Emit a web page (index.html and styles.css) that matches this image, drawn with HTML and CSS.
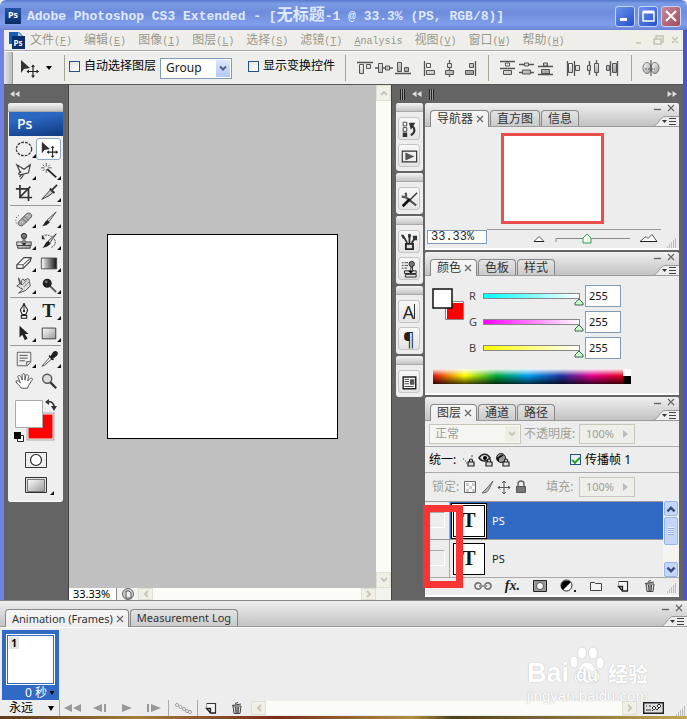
FILE: index.html
```html
<!DOCTYPE html>
<html lang="zh-CN">
<head>
<meta charset="utf-8">
<title>Adobe Photoshop CS3 Extended</title>
<link rel="stylesheet" href="styles.css">
</head>
<body>
<svg class="defs" aria-hidden="true">
  <defs>
    <linearGradient id="metal" x1="0" y1="0" x2="1" y2="1"><stop offset="0" stop-color="#fff"/><stop offset="1" stop-color="#999"/></linearGradient>
    <linearGradient id="fade"><stop offset="0" stop-color="#fff"/><stop offset="1" stop-color="#111"/></linearGradient>
  </defs>
  <symbol id="i-move" viewBox="0 0 20 20"><path d="M2 2v13l3-4 6-1z" fill="#333"/><path d="M14 8v11M8.500 13.500h11" stroke="#222" stroke-width="1.200"/><path d="M14 6.500l-2 2.500h4zM14 20l-2-2.500h4zM7.500 13.500l2.500-2v4zM20 13.500l-2.500-2v4z" fill="#222"/></symbol>
  <symbol id="i-chev" viewBox="0 0 10 10"><path d="M2 3l3 3 3-3" fill="none" stroke="currentColor" stroke-width="2"/></symbol>
  <symbol id="i-trash" viewBox="0 0 14 14"><path d="M3 5h8l-1 7.500H4z" fill="#ddd" stroke="#444"/><path d="M2 4.500l9-1.500M5 2.500l3-1M5.500 6l.5 6M7 6v6M8.500 6L8 12" fill="none" stroke="#444"/></symbol>
  <symbol id="i-new" viewBox="0 0 14 14"><path d="M2 2h10v10H2z" fill="#f4f4f4"/><path d="M2 2.500h9.500V12" fill="none" stroke="#333" stroke-width="1.200"/><path d="M12 12H6.500V7.500H2.500L6.500 12" fill="#ccc" stroke="#222" stroke-width="1.300"/><path d="M2.500 2v5" stroke="#999"/></symbol>
  <symbol id="i-min" viewBox="0 0 10 10"><path d="M2 6.500h7" stroke="#666" stroke-width="1.400"/></symbol>
  <symbol id="i-x" viewBox="0 0 10 10"><path d="M2 2l6 6M8 2L2 8" stroke="#666" stroke-width="1.200"/></symbol>
  <symbol id="i-menu" viewBox="0 0 26 10"><path d="M0 10C5 10 7 0 12 0h14v10z" fill="#eee"/><path d="M0 10C5 10 7 .5 12 .5h14" fill="none" stroke="#999"/><path d="M9 4h5l-2.500 3z" fill="#333"/><path d="M16 2.500h7M16 5.500h7M16 8.500h7" stroke="#444"/></symbol>
  <symbol id="i-lock" viewBox="0 0 8 9"><path d="M2.500 4V2.500a1.500 1.500 0 013 0V4M1 4h6v4H1z" fill="#ddd" stroke="#222" stroke-width="1.200"/></symbol>
  <symbol id="i-grip" viewBox="0 0 10 10"><path d="M8 1h1M6 3h1M8 3h1M4 5h1M6 5h1M8 5h1M2 7h1M4 7h1M6 7h1M8 7h1M0 9h1M2 9h1M4 9h1M6 9h1M8 9h1" stroke="#888"/></symbol>
</svg>

<main class="app">
  <header class="titlebar">
    <span class="logo">Ps</span>
    <h1>Adobe Photoshop CS3 Extended - [<span>无标题</span>-1 @ 33.3% (PS, RGB/8)]</h1>
    <button class="win" aria-label="最小化"><svg viewBox="0 0 18 18"><path d="M4 12.500h7" stroke="#fff" stroke-width="3"/></svg></button>
    <button class="win" aria-label="最大化"><svg viewBox="0 0 18 18"><path d="M4 5h11v9H4z" fill="none" stroke="#fff" stroke-width="1.500"/><path d="M4 5h11" stroke="#fff" stroke-width="3"/></svg></button>
    <button class="win close" aria-label="关闭"><svg viewBox="0 0 18 18"><path d="M4 4l10 10M14 4L4 14" stroke="#fff" stroke-width="2"/></svg></button>
  </header>

  <div class="frame">
    <nav class="menubar">
      <svg class="docicon" viewBox="0 0 17 17"><path d="M1 0h10l4 4v8H1z" fill="#1460b8"/><path d="M10 0v5h5" fill="#a8cdf0"/><path d="M4 4h13v13H4z" fill="#0b2f6b"/><text x="5.500" y="14" fill="#fff" font-size="8" font-weight="bold">Ps</text></svg>
      <a href="#">文件<i>(<u>F</u>)</i></a><a href="#">编辑<i>(<u>E</u>)</i></a><a href="#">图像<i>(<u>I</u>)</i></a><a href="#">图层<i>(<u>L</u>)</i></a><a href="#">选择<i>(<u>S</u>)</i></a><a href="#">滤镜<i>(<u>T</u>)</i></a><a href="#"><i><u>A</u>nalysis</i></a><a href="#">视图<i>(<u>V</u>)</i></a><a href="#">窗口<i>(<u>W</u>)</i></a><a href="#">帮助<i>(<u>H</u>)</i></a>
      <svg class="mdi" viewBox="0 0 52 14"><rect width="52" height="14" fill="#f1f0e6"/><path d="M5 10h5M23 6h7v5h-7zM25 6V3h7v6h-2M41 4l6 6M47 4l-6 6" fill="none" stroke="#c2c2b4" stroke-width="1.500"/></svg>
    </nav>

    <div class="options">
      <span class="gripper"></span>
      <svg class="opt-tool" viewBox="0 0 20 20"><use href="#i-move"/></svg>
      <svg class="tri" viewBox="0 0 6 4"><path d="M0 0h6L3 4z"/></svg>
      <span class="div"></span>
      <label class="check"><input type="checkbox">自动选择图层</label>
      <span class="combo group-combo"><select aria-label="自动选择"><option>Group</option></select><svg viewBox="0 0 10 10"><use href="#i-chev"/></svg></span>
      <label class="check second"><input type="checkbox">显示变换控件</label>
      <div class="aligns">
        <span class="div"></span>
        <svg viewBox="0 0 56 18"><g fill="url(#metal)" stroke="#555"><path d="M3.500 5.500h4v9h-4zM10.500 5.500h4v4h-4zM22.500 4.500h4v9h-4zM29.500 7h4v4h-4zM41.500 3.500h4v9h-4zM48.500 8.500h4v4h-4z"/><path d="M1 3.500h16M19 9h3M27 9h2M34 9h3M39 14.500h16" stroke-width="1.300"/></g></svg>
        <svg viewBox="0 0 56 18"><g fill="url(#metal)" stroke="#555"><path d="M4.500 4.500h4v4h-4zM4.500 11.500h8v4h-8zM25.500 4.500h4v4h-4zM23.500 11.500h8v4h-8zM47.500 4.500h4v4h-4zM43.500 11.500h8v4h-8z"/><path d="M2.500 2v15M27.500 1v3M27.500 9v2M27.500 16v2M53.500 2v15" stroke-width="1.300"/></g></svg>
        <span class="div"></span>
        <svg viewBox="0 0 56 18"><g fill="url(#metal)" stroke="#555"><path d="M6.500 4h4v3h-4zM4.500 11.500h8v4h-8zM25.500 4h4v3h-4zM23.500 11h8v4h-8zM44.500 4h4v3h-4zM42.500 10.500h8v4h-8z"/><path d="M1 2.500h15M1 9.500h15M20 5.500h5M30 5.500h5M20 13.500h3M32 13.500h3M39 7.500h15M39 15.500h15" stroke-width="1.300"/></g></svg>
        <svg viewBox="0 0 56 18"><g fill="url(#metal)" stroke="#555"><path d="M3.500 4.500h4v9h-4zM10.500 6.500h4v5h-4zM22.500 6.500h3v5h-3zM29.500 4.500h4v9h-4zM41.500 6.500h3v5h-3zM47.500 4.500h4v9h-4z"/><path d="M2.500 2v15M9.500 2v15M24.500 2v4M24.500 12v4M31.500 1v3M31.500 14v3M45.500 2v15M52.500 2v15" stroke-width="1.300"/></g></svg>
        <span class="div"></span>
        <svg class="auto" viewBox="0 0 18 18"><g fill="url(#metal)" stroke="#777"><ellipse cx="5" cy="9" rx="4" ry="5.500"/><ellipse cx="13" cy="9" rx="4" ry="5.500"/></g><path d="M9 1v16" stroke="#444"/><path d="M3 10h10" stroke="#666" stroke-dasharray="2 1"/></svg>
      </div>
    </div>

    <section class="workspace">
      <aside class="toolbox">
        <div class="dockbar"><svg class="dbl" viewBox="0 0 10 6"><path d="M4.500 0v6L0 3zM9.500 0v6L5 3z" fill="#ddd"/></svg></div>
        <div class="palette">
          <div class="grab"></div>
          <div class="banner">Ps</div>
          <div class="tools">
            <button class="more" aria-label="椭圆选框"><svg viewBox="0 0 20 20"><ellipse cx="10" cy="10" rx="8.500" ry="7.500" fill="none" stroke="#333" stroke-width="1.400" stroke-dasharray="3 1.300"/></svg></button>
            <button class="on" aria-label="移动"><svg viewBox="0 0 20 20"><use href="#i-move"/></svg></button>
            <button class="more" aria-label="套索"><svg viewBox="0 0 20 20"><path d="M6 12L2 3l8 5 7-5-2 9-8 2-2 3m2-6c-4 1-4 4 0 3s1 3-1 5" fill="none" stroke="#444" stroke-width="1.300"/></svg></button>
            <button class="more" aria-label="魔棒"><svg viewBox="0 0 20 20"><path d="M7 1v4M7 8v4M1 6.500h4M9 6.500h4M3 3l2 2M11 3L9 5M3 10l2-2" stroke="#555"/><path d="M8 8l10 9" stroke="#222" stroke-width="2"/></svg></button>
            <button aria-label="裁剪"><svg viewBox="0 0 20 20"><path d="M1 5.500h14V19M5.500 1v14H19M5 15L17 3" fill="none" stroke="#333" stroke-width="1.900"/></svg></button>
            <button class="more" aria-label="切片"><svg viewBox="0 0 20 20"><path d="M2 17L12 6l3 3-5 4z" fill="url(#metal)" stroke="#333"/><path d="M12 8l7-7M11 5l5 5" stroke="#333" stroke-width="2"/></svg></button>
          </div>
          <hr>
          <div class="tools">
            <button class="more" aria-label="修复画笔"><svg viewBox="0 0 20 20"><path d="M4 6C0 8 0 14 3 17" fill="none" stroke="#333" stroke-dasharray="1 2"/><path d="M4 13l9-9c3-2 7 1 5 4l-9 9c-3 2-7-1-5-4z" fill="#aaa" stroke="#555"/><path d="M8 9l5 5M10 7l5 5" stroke="#666"/><path d="M6 13h1M8 14h1M13 6h1M15 7h1M11 10h1" stroke="#eee"/></svg></button>
            <button class="more" aria-label="画笔"><svg viewBox="0 0 20 20"><path d="M18 2L8 11l2 2z" fill="#ddd" stroke="#444"/><path d="M8 11l3 3-4 3-5 1c2-1 3-5 6-7z" fill="#222"/></svg></button>
            <button class="more" aria-label="仿制图章"><svg viewBox="0 0 20 20"><circle cx="10" cy="4.500" r="3" fill="#777" stroke="#333"/><path d="M9 7h2v4h7v4H2v-4h7zM3 15v3h14v-3" fill="url(#metal)" stroke="#333"/><path d="M7 12h6l-3 3z" fill="#222"/></svg></button>
            <button class="more" aria-label="历史画笔"><svg viewBox="0 0 20 20"><path d="M18 2L9 10l2 2z" fill="#ddd" stroke="#333"/><path d="M9 10l3 3-4 3-6 2c3-1 3-6 7-8z" fill="#222"/><path d="M3 5c5-4 8 0 10 0M16 8c3 5-1 9-4 9" fill="none" stroke="#333" stroke-dasharray="2 1"/><path d="M2 3v5h4z" fill="#333"/></svg></button>
            <button class="more" aria-label="橡皮擦"><svg viewBox="0 0 20 20"><path d="M2 12l8-8h8l-1 4-8 8H2z" fill="#fff" stroke="#444" stroke-width="1.300"/><path d="M2 12h7l9-8M9 12v4" fill="none" stroke="#555" stroke-width="1.200"/></svg></button>
            <button class="more" aria-label="渐变"><svg viewBox="0 0 20 20"><path d="M1.500 4.500h17v12h-17z" fill="url(#fade)" stroke="#444"/></svg></button>
            <button class="more" aria-label="涂抹"><svg viewBox="0 0 20 20"><path d="M4 2l3 8V5c1-2 3-2 3 0l4-2c2 0 2 2 2 3l1 5-5 5-8 3c3-3 5-4 4-5-3 0-4-3-6-3l3-2z" fill="#ddd" stroke="#444"/><path d="M8 10l5-5M10 12l5-5" stroke="#666"/></svg></button>
            <button class="more" aria-label="减淡"><svg viewBox="0 0 20 20"><path d="M11 11l7 7" stroke="#555" stroke-width="2"/><circle cx="8" cy="8" r="5" fill="#222"/><circle cx="7" cy="6.500" r="1.500" fill="#777"/></svg></button>
          </div>
          <hr>
          <div class="tools">
            <button class="more" aria-label="钢笔"><svg viewBox="0 0 20 20"><path d="M10 1c0 4-4 6-4 8l2 5h4l2-5c0-2-4-4-4-8zM7 15h6v3H7z" fill="#eee" stroke="#222" stroke-width="1.200"/><path d="M10 2v7" stroke="#222"/><circle cx="10" cy="10" r="1.200"/></svg></button>
            <button class="more glyph" aria-label="文字">T</button>
            <button class="more" aria-label="路径选择"><svg viewBox="0 0 20 20"><path d="M5 2v13l3-3 3 6 3-2-3-5h4z" fill="#222"/></svg></button>
            <button class="more" aria-label="矩形"><svg viewBox="0 0 20 20"><path d="M2.500 4.500h15v12h-15z" fill="url(#metal)" stroke="#333"/></svg></button>
          </div>
          <hr>
          <div class="tools">
            <button class="more" aria-label="注释"><svg viewBox="0 0 20 20"><path d="M2.500 2.500h15v11l-4 4h-11z" fill="#eee" stroke="#555"/><path d="M5 6h9M5 9h9M5 12h6M13 17v-4h4" fill="none" stroke="#444"/></svg></button>
            <button class="more" aria-label="吸管"><svg viewBox="0 0 20 20"><path d="M3 17l8-9 2 2-8 7-3 1z" fill="#fff" stroke="#444"/><path d="M10 6l5 5M12 8l3-5c2-3 6 0 3 3l-5 4z" fill="#222" stroke="#222" stroke-width="1.500"/></svg></button>
            <button aria-label="抓手"><svg viewBox="0 0 20 20"><path d="M7 18c-1-3-6-5-6-8 2-1 4 1 5 2L3 5c1-2 3-1 4 1l1 3V3c1-2 3-1 3 0v6l1-5c1-2 3-1 3 1l-1 5 3-3c2-1 3 1 2 2l-4 6-1 3z" fill="#fff" stroke="#555" stroke-width="1.100"/></svg></button>
            <button aria-label="缩放"><svg viewBox="0 0 20 20"><path d="M11 11l7 7" stroke="#333" stroke-width="2.500"/><circle cx="8" cy="7.500" r="5" fill="#ddd" stroke="#555" stroke-width="1.500"/></svg></button>
          </div>
          <svg class="swatches" viewBox="0 0 55 52"><path d="M20 22h25v25H20z" fill="red" stroke="#aaa" stroke-width="3"/><path d="M20 22h25v25H20z" fill="red" stroke="#eee"/><path d="M7.500 8.500h27v27h-27z" fill="#fff" stroke="#aaa"/><path d="M40 10c4-1 6 2 6 5" fill="none" stroke="#333" stroke-width="1.600"/><path d="M37 10l4-3v6zM43 14h6l-3 5z" fill="#333"/><path d="M9.500 43.500h6v6h-6z" fill="#fff" stroke="#222"/><path d="M6 40h7v7H6z"/></svg>
          <div class="modes">
            <button aria-label="快速蒙版"><svg viewBox="0 0 22 16"><path d="M.5.500h21v15H.5z" fill="#eee" stroke="#333"/><circle cx="11" cy="8" r="5.500" fill="#fff" stroke="#222" stroke-width="1.200"/></svg></button>
            <button class="more" aria-label="屏幕模式"><svg viewBox="0 0 22 16"><path d="M.5.500h21v15H.5z" fill="#ddd" stroke="#333"/><path d="M2.500 2.500h17v12h-17z" fill="url(#metal)" stroke="#777"/></svg></button>
          </div>
        </div>
      </aside>

      <div class="document">
        <div class="stage"><div class="canvas"></div></div>
        <div class="vscroll"><button aria-label="上"><svg class="flip" viewBox="0 0 10 10"><use href="#i-chev"/></svg></button><button aria-label="下"><svg viewBox="0 0 10 10"><use href="#i-chev"/></svg></button></div>
        <div class="status"><span class="zoomtext">33.33%</span><button class="info" aria-label="文档信息"><svg viewBox="0 0 14 12"><circle cx="7" cy="6" r="5.500" fill="#ccc" stroke="#666"/><path d="M5 3h3l2 2v5H5z" fill="#eee" stroke="#555"/></svg></button><div class="hscroll"><button aria-label="左"><svg class="left" viewBox="0 0 10 10"><use href="#i-chev"/></svg></button><button aria-label="右"><svg class="right" viewBox="0 0 10 10"><use href="#i-chev"/></svg></button></div></div>
      </div>

      <aside class="docks">
        <div class="dockbar"><span class="bars"></span><svg class="dbl" viewBox="0 0 10 6"><path d="M4.500 0v6L0 3zM9.500 0v6L5 3z" fill="#ddd"/></svg><span class="bars"></span><svg class="dbl end" viewBox="0 0 10 6"><path d="M.5 0v6L5 3zM5.500 0v6L10 3z" fill="#ddd"/></svg></div>
        <div class="dockcols">
          <div class="icondock">
            <div class="igroup"><div class="grab"></div>
              <button aria-label="历史记录"><svg viewBox="0 0 20 20"><path d="M3.500 2.500h4v4h-4zM3.500 8.500h4v4h-4z" fill="#fff" stroke="#333"/><path d="M3 14h5v5H3z" fill="#333"/><path d="M12 17c5-3 5-7 2-10" fill="none" stroke="#333" stroke-width="2.500"/><path d="M10 3h7l-5 8z" fill="#333"/></svg></button>
              <button aria-label="动作"><svg viewBox="0 0 20 20"><path d="M2.500 4.500h16v12h-16z" fill="#eee" stroke="#333" stroke-width="1.300"/><path d="M6 6v9l10-4.500z" fill="#555"/></svg></button></div>
            <div class="igroup"><div class="grab"></div>
              <button aria-label="工具预设"><svg viewBox="0 0 20 20"><path d="M2 7c4 2 6 0 4-4M5 7l13 10" fill="none" stroke="#555" stroke-width="2.500"/><path d="M19 3l-8 8" stroke="#333" stroke-width="1.500"/><path d="M11 10l-8 8" stroke="#111" stroke-width="3"/></svg></button></div>
            <div class="igroup"><div class="grab"></div>
              <button aria-label="画笔"><svg viewBox="0 0 20 20"><path d="M6.500 12h8v6h-8z" fill="#ddd" stroke="#222" stroke-width="2"/><path d="M8 11L4 4M10.500 11V3M13 11l4-6" stroke="#333" stroke-width="2"/><path d="M1 2h3l2 5-3-1zM9 1h3v4H9zM14 3h5v5h-4z" fill="#333"/></svg></button>
              <button aria-label="仿制源"><svg viewBox="0 0 20 20"><path d="M2 3h2M2 6h2M2 9h2M5 3h4M5 6h4M5 9h3" stroke="#333"/><circle cx="13" cy="4.500" r="3" fill="#777" stroke="#222"/><path d="M12 8h2v4h4v3H5v-3h7zM6 16h12v3H6z" fill="#ddd" stroke="#222"/><path d="M9 12h6l-3 3z"/></svg></button></div>
            <div class="igroup"><div class="grab"></div>
              <button class="chartype" aria-label="字符">A<span class="caret"></span></button>
              <button class="chartype" aria-label="段落">¶</button></div>
            <div class="igroup"><div class="grab"></div>
              <button aria-label="图层复合"><svg viewBox="0 0 20 20"><path d="M3.500 4.500h14v13h-14z" fill="#fff" stroke="#222" stroke-width="1.600"/><path d="M5 7h5M5 9.500h5M5 12h5M5 15h10" stroke="#333"/><path d="M11 7h5v6h-5z" fill="#555"/></svg></button></div>
          </div>

          <div class="panels">
            <section class="panel nav">
              <header class="tabs"><button class="tab active">导航器<svg viewBox="0 0 10 10"><use href="#i-x"/></svg></button><button class="tab">直方图</button><button class="tab">信息</button><div class="ctl"><span><svg viewBox="0 0 10 10"><use href="#i-min"/></svg><svg viewBox="0 0 10 10"><use href="#i-x"/></svg></span><svg class="pm" viewBox="0 0 26 10"><use href="#i-menu"/></svg></div></header>
              <div class="preview"><div></div></div>
              <footer class="navfoot"><input type="text" aria-label="缩放比例" value="33.33%"><svg class="navslide" viewBox="0 0 180 19"><path d="M0 .5h174" stroke="#999"/><path d="M47 12.500l5-5 5 5z" fill="#fff" stroke="#555"/><path d="M47 12.500h10" stroke="#222"/><path d="M69 13v-3.500h74" fill="none" stroke="#888"/><path d="M96 14V9l4-4 4 4v5z" fill="#efe" stroke="#3a9a50"/><path d="M153 12.500l6-5 2 2 4-4 5 7" fill="#fff" stroke="#555"/><path d="M153 12.500h17" stroke="#222"/></svg><svg class="grip" viewBox="0 0 10 10"><use href="#i-grip"/></svg></footer>
            </section>

            <section class="panel color">
              <header class="tabs"><button class="tab active">颜色<svg viewBox="0 0 10 10"><use href="#i-x"/></svg></button><button class="tab">色板</button><button class="tab">样式</button><div class="ctl"><span><svg viewBox="0 0 10 10"><use href="#i-min"/></svg><svg viewBox="0 0 10 10"><use href="#i-x"/></svg></span><svg class="pm" viewBox="0 0 26 10"><use href="#i-menu"/></svg></div></header>
              <div class="mixer">
                <svg class="duo" viewBox="0 0 34 34"><path d="M13.500 13.500h18v18h-18z" fill="#fff" stroke="#888"/><path d="M15 15h16v16H15z" fill="red"/><path d="M1 1h19v19H1z" fill="#fff" stroke="#111" stroke-width="1.500"/></svg>
                <div class="channels">
                  <label><span>R</span><b class="bar cyan"><svg viewBox="0 0 10 8"><path d="M1 7V5l4-4 4 4v2z" fill="#cfc" stroke="#365"/></svg></b><input type="text" value="255"></label>
                  <label><span>G</span><b class="bar magenta"><svg viewBox="0 0 10 8"><path d="M1 7V5l4-4 4 4v2z" fill="#cfc" stroke="#365"/></svg></b><input type="text" value="255"></label>
                  <label><span>B</span><b class="bar yellow"><svg viewBox="0 0 10 8"><path d="M1 7V5l4-4 4 4v2z" fill="#cfc" stroke="#365"/></svg></b><input type="text" value="255"></label>
                </div>
              </div>
              <div class="ramp"><i></i><b></b></div>
            </section>

            <section class="panel layers">
              <header class="tabs"><button class="tab active">图层<svg viewBox="0 0 10 10"><use href="#i-x"/></svg></button><button class="tab">通道</button><button class="tab">路径</button><div class="ctl"><span><svg viewBox="0 0 10 10"><use href="#i-min"/></svg><svg viewBox="0 0 10 10"><use href="#i-x"/></svg></span><svg class="pm" viewBox="0 0 26 10"><use href="#i-menu"/></svg></div></header>
              <div class="lrow dim"><span class="combo blend"><select aria-label="混合模式" disabled><option>正常</option></select><svg viewBox="0 0 10 10"><use href="#i-chev"/></svg></span><span>不透明度:</span><button class="pct" disabled>100%<svg viewBox="0 0 5 8"><path d="M0 0v8l5-4z" fill="#bbb"/></svg></button></div>
              <div class="lrow unify"><span>统一:</span>
                <svg viewBox="0 0 50 16"><path d="M2 7h1M4 9h1M5 11h1M7 10h1M8 8h1M10 4h2" stroke="#444"/><path d="M18 6c3-5 8-5 11 0-3 4-8 4-11 0z" fill="#ddd" stroke="#222" stroke-width="1.500"/><circle cx="24" cy="6" r="2"/><circle cx="40" cy="6" r="4.500" fill="#999" stroke="#222"/><path d="M37 9V6l5-3" fill="none" stroke="#111" stroke-width="2"/><use href="#i-lock" x="6" y="6" width="8" height="9"/><use href="#i-lock" x="24" y="6" width="8" height="9"/><use href="#i-lock" x="41" y="6" width="8" height="9"/></svg>
                <label class="check prop"><input type="checkbox" checked>传播帧 1</label></div>
              <div class="lrow dim locks"><span>锁定:</span>
                <svg viewBox="0 0 66 16"><path d="M2.500 2.500h11v11h-11z" fill="#fff" stroke="#666"/><path d="M4 4h3v3H4zM10 4h3v3h-3zM7 7h3v3H7zM4 10h3v3H4zM10 10h3v3h-3z" fill="#ccc"/><path d="M31 2l-6 7-5 5c5 0 6-2 7-4z" fill="#bbb" stroke="#666"/><path d="M42 3v11M36 8.500h12M40 4l2-2 2 2M40 13l2 2 2-2M38 7l-2 1.500 2 2M46 7l2 1.500-2 2" fill="none" stroke="#555"/><path d="M56 8V5c0-4 6-4 6 0v3" fill="none" stroke="#666" stroke-width="1.500"/><path d="M54.500 7.500h9v6h-9z" fill="#777" stroke="#555"/></svg>
                <span class="fill">填充:</span><button class="pct" disabled>100%<svg viewBox="0 0 5 8"><path d="M0 0v8l5-4z" fill="#bbb"/></svg></button></div>
              <div class="list">
                <ul>
                  <li class="sel"><span class="eye"><i></i></span><span class="thumb">T</span><span class="name">PS</span></li>
                  <li><span class="eye"><i></i></span><span class="thumb">T</span><span class="name">PS</span></li>
                </ul>
                <div class="xpscroll"><button aria-label="上"><svg class="flip" viewBox="0 0 10 10"><use href="#i-chev"/></svg></button><span></span><button class="down" aria-label="下"><svg viewBox="0 0 10 10"><use href="#i-chev"/></svg></button></div>
                <div class="marker"></div>
              </div>
              <footer class="lfoot">
                <button aria-label="链接"><svg viewBox="0 0 18 14"><path d="M1 7c0-4 6-4 6-1M7 8c0 3-6 3-6-1M11 6c0-3 6-3 6 1s-6 4-6 1M5 7h8" fill="none" stroke="#777" stroke-width="1.600"/></svg></button>
                <button class="fx" aria-label="图层样式">fx.</button>
                <button aria-label="蒙版"><svg viewBox="0 0 14 14"><path d="M.5 1.500h13v11H.5z" fill="#999" stroke="#222"/><circle cx="7" cy="7" r="3.500" fill="#fff" stroke="#555"/></svg></button>
                <button aria-label="调整图层"><svg class="wide" viewBox="0 0 16 14"><circle cx="6.500" cy="6.500" r="5.500" fill="#fff" stroke="#222"/><path d="M11 3L3 11C-2 6 3-1 11 3z"/><path d="M14 12h2" stroke="#222" stroke-width="2"/></svg></button>
                <button aria-label="组"><svg viewBox="0 0 14 14"><path d="M1.500 11.500v-8h4l1 1h6v7z" fill="#f4f4f4" stroke="#444"/></svg></button>
                <button aria-label="新建"><svg viewBox="0 0 14 14"><use href="#i-new"/></svg></button>
                <button aria-label="删除"><svg viewBox="0 0 14 14"><use href="#i-trash"/></svg></button>
                <svg class="grip" viewBox="0 0 10 10"><use href="#i-grip"/></svg>
              </footer>
            </section>
          </div>
        </div>
      </aside>
    </section>
  </div>

  <section class="anim">
    <header class="tabs"><button class="tab active">Animation (Frames)<svg viewBox="0 0 10 10"><use href="#i-x"/></svg></button><button class="tab">Measurement Log</button><div class="ctl"><span><svg viewBox="0 0 10 10"><use href="#i-min"/></svg><svg viewBox="0 0 10 10"><use href="#i-x"/></svg></span><svg class="pm" viewBox="0 0 26 10"><use href="#i-menu"/></svg></div></header>
    <div class="frames"><div class="cell"><div class="shot"><b>1</b></div><div class="delay">0 秒<svg class="tri" viewBox="0 0 6 5"><path d="M0 0h6L3 5z"/></svg></div></div></div>
    <footer class="playbar">
      <button class="loop">永远<svg class="tri" viewBox="0 0 6 5"><path d="M0 0h6L3 5z"/></svg></button>
      <div class="play">
        <button aria-label="第一帧"><svg viewBox="0 0 18 10"><path d="M8 1v8L0 5zM17 1v8L9 5z"/></svg></button>
        <button aria-label="上一帧"><svg viewBox="0 0 18 10"><path d="M11 1v8L2 5zM13 1h2v8h-2z"/></svg></button>
        <button aria-label="播放"><svg viewBox="0 0 18 10"><path d="M4 1v8l10-4z"/></svg></button>
        <button aria-label="下一帧"><svg viewBox="0 0 18 10"><path d="M2 1h2v8H2zM6 1v8l10-4z"/></svg></button>
      </div>
      <button class="tween" aria-label="过渡"><svg viewBox="0 0 18 12"><g fill="#fff" stroke="#999"><circle cx="3" cy="3" r="1.500"/><circle cx="6.500" cy="5" r="1.500"/><circle cx="10" cy="7" r="1.500"/><circle cx="13" cy="9" r="1.500"/><circle cx="16" cy="10" r="1.500"/></g></svg></button>
      <div class="ops"><button aria-label="复制帧"><svg viewBox="0 0 14 14"><use href="#i-new"/></svg></button><button aria-label="删除帧"><svg viewBox="0 0 14 14"><use href="#i-trash"/></svg></button></div>
      <div class="hscroll"><button aria-label="左"><svg class="left" viewBox="0 0 10 10"><use href="#i-chev"/></svg></button><button aria-label="右"><svg class="right" viewBox="0 0 10 10"><use href="#i-chev"/></svg></button></div>
      <button class="timeline" aria-label="时间轴"><svg viewBox="0 0 21 12"><path d="M.7.700h19.600v10.600H.7z" fill="#ddd" stroke="#222" stroke-width="1.400"/><path d="M3 4h1M3 8h5M6 4h2M9 9l3-3 2 2 4-4" fill="none" stroke="#333"/><path d="M11 4l2 2-2 2-2-2zM16 2l2 2-2 2-2-2z" fill="#fff" stroke="#222"/></svg></button>
      <svg class="grip" viewBox="0 0 10 10"><use href="#i-grip"/></svg>
    </footer>
    <div class="watermark">
      <div class="brand"><span>Bai</span><span class="paw"><svg viewBox="0 0 36 38"><g fill="#fff" stroke="#ddd"><ellipse cx="5" cy="16" rx="4" ry="6"/><ellipse cx="13" cy="7" rx="4.500" ry="6"/><ellipse cx="24" cy="7" rx="4.500" ry="6"/><ellipse cx="31" cy="17" rx="4" ry="6"/><path d="M18 16c6 0 7 6 11 10 4 5 1 11-5 11H11c-6 0-8-6-4-11 4-4 5-10 11-10z"/></g></svg><em>du</em></span><span class="cn">经验</span></div>
      <div class="site">jingyan.baidu.com</div>
    </div>
  </section>
  <div class="desktop"></div>
</main>
</body>
</html>
```
FILE: styles.css
```css
* { box-sizing: border-box; }
body {
  margin: 0;
  font: 11px/16px "Noto Sans", "Noto Sans CJK SC", sans-serif;
  color: #222;
  background: #ececec;
}
button, select, input { font: inherit; color: inherit; margin: 0; padding: 0; }
button { background: none; border: 0; display: flex; align-items: center; justify-content: center; }
svg { display: block; flex: none; }
.defs { position: absolute; width: 0; height: 0; }
.app { min-height: 100vh; display: flex; flex-direction: column; }

/* window title */
.titlebar {
  height: 30px;
  display: flex;
  align-items: center;
  gap: 3px;
  padding: 2px 6px 0 5px;
  border-radius: 6px 6px 0 0;
  background: linear-gradient(#5878cc, #7a9ce6 12%, #6f8cdc 40%, #7f9eea 80%, #6a84d4);
}
.logo {
  width: 16px; height: 16px;
  background: linear-gradient(#2456a4, #0b2c66);
  color: #fff;
  font-size: 9px;
  font-weight: bold;
  text-align: center;
  line-height: 14px;
}
h1 {
  flex: 1;
  margin: 0;
  padding-left: 3px;
  font: bold 13px/20px "Liberation Mono", "Noto Sans CJK SC", monospace;
  color: #dfe9ff;
  white-space: nowrap;
}
h1 span { font-size: 16px; }
.win {
  width: 20px; height: 21px;
  border: 1px solid #c5d5fa;
  border-radius: 3px;
  background: linear-gradient(135deg, #6d92f0, #2450c8);
}
.win svg { width: 18px; height: 18px; }
.win.close { background: linear-gradient(135deg, #c88898, #a04c60); }

.frame {
  flex: 1;
  display: flex;
  flex-direction: column;
  border-left: 4px solid #7080e4;
  border-right: 4px solid #4a56c8;
}

/* menu */
.menubar {
  height: 21px;
  display: flex;
  align-items: center;
  gap: 12px;
  padding: 0 0 0 4px;
  background: #efeeea;
  border-bottom: 1px solid #a8a8a8;
}
.docicon { width: 17px; height: 17px; margin-right: -7px; }
.menubar a { color: #99998c; text-decoration: none; font-size: 12px; white-space: nowrap; }
.menubar i { font: 10px "Liberation Mono", monospace; }
.mdi { width: 52px; height: 14px; margin-left: auto; }

/* tool options */
.options {
  height: 33px;
  display: flex;
  align-items: center;
  background: #eeeeec;
  border-top: 1px solid #fff;
}
.gripper { width: 9px; height: 100%; background: linear-gradient(90deg, #e4e4e4, #bbb); border-right: 1px solid #999; margin-right: 6px; }
.opt-tool { width: 20px; height: 20px; }
.tri { width: 6px; height: 4px; }
.options > .tri { margin: 0 12px 0 7px; }
.div { width: 1px; height: 26px; background: #a5a596; }
.check { display: flex; align-items: center; gap: 4px; font-size: 12px; color: #000; white-space: nowrap; }
.options .check { margin: 0 0 4px 4px; }
.options .check.second { margin: 0 10px 4px 16px; }
input[type="checkbox"] {
  appearance: none;
  width: 11px; height: 11px;
  border: 1px solid #24538a;
  background: linear-gradient(135deg, #e4e4e0, #fff);
}
input[type="checkbox"]:checked::after {
  content: "";
  display: block;
  width: 6px; height: 3px;
  margin: 2px 1px;
  border: solid #21a121;
  border-width: 0 0 2px 2px;
  transform: rotate(-45deg);
}
.combo { position: relative; display: block; }
.combo select {
  appearance: none;
  width: 100%; height: 100%;
  padding-left: 5px;
  border: 1px solid #7f9db9;
  border-radius: 0;
  background: #fff;
  opacity: 1;
}
.combo svg {
  position: absolute;
  right: 2px; top: 2px;
  width: 14px; height: calc(100% - 4px);
  padding: 2px;
  background: linear-gradient(#dce6fd, #b4c8f6);
  color: #4d6185;
  pointer-events: none;
}
.group-combo { width: 72px; height: 21px; margin-left: 4px; font-size: 12px; }
.aligns { display: flex; align-items: center; gap: 10px; }
.aligns svg { width: 56px; height: 18px; }
.aligns .auto { width: 18px; }

/* workspace */
.workspace { flex: 1; display: flex; background: #646464; border-top: 1px solid #555; }
.dockbar { height: 18px; display: flex; align-items: center; }
.dbl { width: 10px; height: 6px; }
.grab { height: 9px; background: linear-gradient(#f4f4f4, #c4c4c4); border-bottom: 1px solid #aaa; }

.toolbox { width: 65px; padding: 0 5px 0 4px; border-right: 1px solid #444; }
.toolbox .dockbar { padding-left: 2px; }
.palette { background: #efefef; border-radius: 3px; overflow: hidden; border-bottom: 1px solid #fff; }
.banner {
  height: 24px;
  margin: 0 0 2px 1px;
  padding-left: 8px;
  background: linear-gradient(170deg, #2b68c2 30%, #123f87 90%);
  color: #fff;
  font: 600 14px/24px "Open Sans", sans-serif;
}
.tools { display: grid; grid-template-columns: 25px 25px; padding-left: 3px; }
.tools button { position: relative; height: 22px; width: 25px; }
.tools svg { width: 18px; height: 18px; }
.tools .on { background: #fff; border: 1px solid #8ea9c0; border-radius: 3px; }
.more::after {
  content: "";
  position: absolute;
  right: 0; bottom: 2px;
  border: 2px solid #111;
  border-top-color: transparent;
  border-left-color: transparent;
}
.tools .glyph { font: bold 19px "Liberation Serif", serif; }
hr { margin: 1px 2px 2px; border: 0; border-top: 1px solid #999; }
.swatches { width: 55px; height: 52px; }
.modes { display: grid; gap: 9px; justify-items: center; padding: 8px 0; }
.modes button { position: relative; width: 36px; height: 16px; }
.modes svg { width: 22px; height: 16px; }
.modes .more::after { bottom: -2px; }

.document { flex: 1; min-width: 0; display: grid; grid-template: minmax(0, 1fr) 12px / minmax(0, 1fr) 15px; background: #c0c0c0; }
.stage { display: grid; place-items: center; }
.canvas { width: 75%; aspect-ratio: 231 / 205; background: #fff; border: 1px solid #000; }
.vscroll { display: flex; flex-direction: column; justify-content: space-between; background: #fbfbf7; }
.vscroll button, .hscroll button { width: 15px; height: 16px; background: #f1f0e8; border: 1px solid #e0dfd4; color: #c9c7ba; }
.vscroll svg, .hscroll svg { width: 10px; height: 10px; }
.flip { transform: rotate(180deg); }
.left { transform: rotate(90deg); }
.right { transform: rotate(-90deg); }
.status { grid-column: 1 / 3; display: flex; background: #f3f3ef; }
.zoomtext { width: 48px; padding-left: 4px; background: #fff; border-right: 1px solid #888; font-size: 11px; line-height: 12px; color: #000; }
.info { width: 21px; height: 12px; }
.info svg { width: 14px; height: 12px; }
.hscroll { flex: 1; display: flex; justify-content: space-between; background: #fbfbf7; }
.status .hscroll { margin-right: 15px; }
.hscroll button { height: 100%; overflow: hidden; }

/* right docks */
.docks { width: 292px; padding: 0 4px 2px 4px; border-left: 1px solid #444; }
.docks .dockbar { padding: 0 2px 0 4px; gap: 7px; }
.bars { width: 5px; height: 11px; background: repeating-linear-gradient(90deg, #222 0 1px, #999 1px 2px); }
.end { margin-left: auto; }
.dockcols { display: flex; gap: 2px; }
.icondock { width: 27px; display: flex; flex-direction: column; gap: 2px; }
.igroup { background: #ededed; border-radius: 3px; overflow: hidden; padding-bottom: 4px; }
.igroup button { width: 22px; height: 23px; margin: 4px 0 0 2px; border: 1px solid #c4c4c4; border-radius: 3px; background: linear-gradient(#f8f8f8, #e4e4e4); }
.igroup .grab + button { margin-top: 5px; }
.igroup svg { width: 18px; height: 18px; }
.igroup .chartype { font: 18px "Open Sans", sans-serif; }
.caret { width: 1px; height: 15px; background: #333; }
.panels { flex: 1; min-width: 0; display: flex; flex-direction: column; gap: 2px; }
.panel { background: #ededed; border-radius: 3px 3px 0 0; border-bottom: 2px solid #fff; }

/* tabs */
.tabs {
  height: 24px;
  display: flex;
  align-items: flex-end;
  gap: 1px;
  padding-left: 5px;
  background: linear-gradient(#f0f0f0, #c6c6c6 90%);
  border-bottom: 1px solid #999;
  border-radius: 3px 3px 0 0;
}
.tab {
  height: 16px;
  padding: 0 6px;
  border: 1px solid #888;
  border-bottom: 0;
  border-radius: 4px 4px 0 0;
  background: linear-gradient(#e4e4e4, #cacaca);
  white-space: nowrap;
  color: #333;
}
.panel .tab { font-size: 12px; }
.tab.active { height: 17px; margin-bottom: -1px; padding-right: 3px; background: linear-gradient(#f6f6f6, #ededed); }
.tab svg { width: 10px; height: 10px; margin-left: 2px; }
.ctl { margin-left: auto; display: flex; flex-direction: column; align-items: flex-end; gap: 3px; }
.ctl span { display: flex; gap: 4px; padding-right: 3px; }
.ctl span svg { width: 10px; height: 10px; }
.pm { width: 26px; height: 10px; }

/* navigator */
.preview { height: 102px; display: flex; justify-content: center; padding-top: 6px; }
.preview div { width: 103px; height: 91px; background: #fff; border: 3px solid #e9504c; }
.navfoot { height: 19px; margin: 0 2px; display: flex; align-items: flex-start; }
.navfoot input { width: 60px; height: 14px; margin-top: 1px; border: 1px solid #7f9db9; background: #fff; font: 12px/12px "Liberation Mono", monospace; padding-left: 3px; }
.navslide { width: 180px; height: 19px; }
.grip { width: 10px; height: 10px; align-self: flex-end; }

/* color */
.mixer { display: flex; padding: 9px 0 0 7px; }
.duo { width: 34px; height: 34px; margin-top: 3px; }
.channels { display: grid; gap: 4px; margin-left: 3px; }
.channels label { display: flex; align-items: center; height: 22px; }
.channels span { width: 14px; color: #444; }
.bar { position: relative; width: 97px; height: 6px; margin-right: 5px; border: 1px solid #888; }
.bar svg { position: absolute; right: -5px; top: 4px; width: 10px; height: 8px; }
.cyan { background: linear-gradient(90deg, #0ff, #fff); }
.magenta { background: linear-gradient(90deg, #f0f, #fff); }
.yellow { background: linear-gradient(90deg, #ff0, #fff); }
.channels input { width: 36px; height: 22px; padding: 0 0 1px 3px; border: 1px solid #7f9db9; background: #fff; color: #111; }
.ramp {
  display: grid;
  grid-template: 7px 8px / 1fr 8px;
  margin: 10px 48px 9px 8px;
  background: linear-gradient(rgba(255,255,255,.9), transparent 45%, rgba(0,0,0,.75)), linear-gradient(90deg, #e01010, #ff0 16%, #00a83c 32%, #00a0f0 48%, #2030a0 65%, #e6008c 80%, #e00000);
}
.ramp i { grid-column: 2; background: #fff; }
.ramp b { grid-column: 2; background: #000; }

/* layers */
.lrow { height: 26px; display: flex; align-items: center; padding: 0 44px 0 4px; border-bottom: 1px solid #aaa; font-size: 12px; color: #000; }
.lrow.dim { color: #a0a096; }
.blend { width: 92px; height: 20px; margin-right: 3px; }
.blend select, .pct { border: 1px solid #c9c7ba; }
.blend select { background: #f5f5f1; }
.blend svg { background: #eeeee6; color: #c9c7ba; }
.pct { width: 56px; height: 20px; margin-left: auto; gap: 9px; background: #eeeeea; color: #a0a096; font-size: 11px; }
.pct svg { width: 5px; height: 8px; }
.unify svg { width: 50px; height: 16px; margin-left: 5px; }
.prop { margin: 0 4px 0 auto; }
.lrow.locks { padding-left: 7px; height: 28px; border: 0; }
.locks > svg { width: 66px; height: 16px; margin-left: 3px; }
.fill { margin-left: 18px; }
.list { position: relative; display: flex; }
.list ul { flex: 1; margin: 0; padding: 0; list-style: none; }
.list li { height: 38px; display: flex; align-items: center; border-top: 1px solid #999; background: #ededed; }
.eye { width: 25px; height: 100%; padding: 10px 4px; background: #ededed; border-right: 1px solid #aaa; }
.eye i { display: block; width: 16px; height: 16px; border: 1px solid #aaa; border-color: #aaa #fff #fff #aaa; }
.list .sel { background: #316ac5; color: #fff; }
.thumb {
  width: 32px; height: 32px;
  margin: 0 7px 0 3px;
  background: #fff;
  border: 1px solid #000;
  color: #111;
  font: bold 20px/28px "Liberation Serif", serif;
  text-align: center;
}
.sel .thumb { outline: 1px solid #fff; box-shadow: 0 0 0 2px #000; }
.xpscroll { width: 16px; display: flex; flex-direction: column; background: #f4f4f0; padding: 0 1px; }
.xpscroll button, .xpscroll span { border: 1px solid #9ab4ea; border-radius: 2px; background: #c6d5fa; color: #35507f; }
.xpscroll button { height: 15px; }
.xpscroll svg { width: 12px; height: 12px; }
.xpscroll span { height: 28px; margin-top: 1px; background: repeating-linear-gradient(#eef 0 1px, #8fabe6 1px 2px) center / 6px 8px no-repeat, #c6d5fa; }
.xpscroll .down { margin-top: auto; }
.marker { position: absolute; left: -2px; top: 4px; width: 40px; height: 83px; border: 7px solid #f93434; pointer-events: none; }
.lfoot { height: 18px; display: flex; align-items: center; justify-content: flex-end; gap: 13px; padding: 0 2px 2px 0; border-top: 1px solid #aaa; }
.lfoot button svg { width: 14px; height: 14px; }
.lfoot button:first-child svg { width: 18px; }
.lfoot button .wide { width: 16px; }
.lfoot .fx { font: italic bold 14px/14px "Liberation Serif", serif; }
.lfoot .grip { margin-left: -3px; }

/* animation */
.anim { position: relative; background: #ededed; border-top: 1px solid #888; }
.anim .tabs { height: 26px; border-radius: 0; }
.anim .tab { height: 17px; }
.anim .tab.active { height: 18px; }
.frames { height: 73px; padding: 2px 0 0 2px; border-top: 1px solid #fff; }
.cell { width: 57px; height: 70px; padding: 4px 4px 0; background: #316ac5; color: #fff; }
.shot { height: 51px; border: 1px solid #fff; padding: 1px; background: #fff; box-shadow: inset 0 0 0 1px #316ac5; }
.shot b { display: block; width: 10px; color: #000; background: #e4e4e4; font-size: 10px; line-height: 12px; text-align: center; margin: 1px; }
.delay { display: flex; justify-content: flex-end; align-items: center; gap: 2px; line-height: 15px; font-size: 12px; }
.playbar { height: 16px; display: flex; align-items: center; padding-right: 1px; }
.playbar .tri { width: 8px; height: 5px; }
.loop { width: 60px; height: 16px; padding-left: 5px; gap: 14px; color: #000; font-size: 12px; border-right: 1px solid #aaa; }
.play { display: flex; gap: 9px; padding: 0 5px 0 4px; fill: #999; }
.play svg { width: 18px; height: 10px; }
.tween { width: 30px; height: 16px; border: solid #aaa; border-width: 0 1px; }
.tween svg { width: 18px; height: 12px; }
.ops { display: flex; gap: 12px; padding: 0 7px 0 6px; }
.ops svg { width: 14px; height: 14px; }
.playbar .hscroll { height: 14px; }
.timeline { margin: 0 12px 0 6px; }
.timeline svg { width: 21px; height: 12px; }
.desktop { height: 3px; background: linear-gradient(90deg, #5a3a1c, #a08038 20%, #7a2a1c 40%, #b09040 60%, #4c4020 66%, #c0a850); }

.watermark { position: absolute; right: 39px; bottom: 13px; color: #fff; text-shadow: 0 0 1px #bbb, 0 0 1px #ccc; }
.brand { display: flex; align-items: flex-end; font: bold 27px/30px "Liberation Sans", sans-serif; }
.paw { position: relative; padding-bottom: 4px; }
.paw svg { width: 36px; height: 38px; }
.paw em { position: absolute; left: 7px; bottom: 3px; font: bold 18px/20px "Liberation Sans", sans-serif; color: #fff; text-shadow: 0 0 2px #888; }
.brand .cn { font: bold 20px/28px "Noto Sans CJK SC", sans-serif; margin-left: 3px; }
.site { font: 15px/15px "Liberation Sans", sans-serif; }
```
